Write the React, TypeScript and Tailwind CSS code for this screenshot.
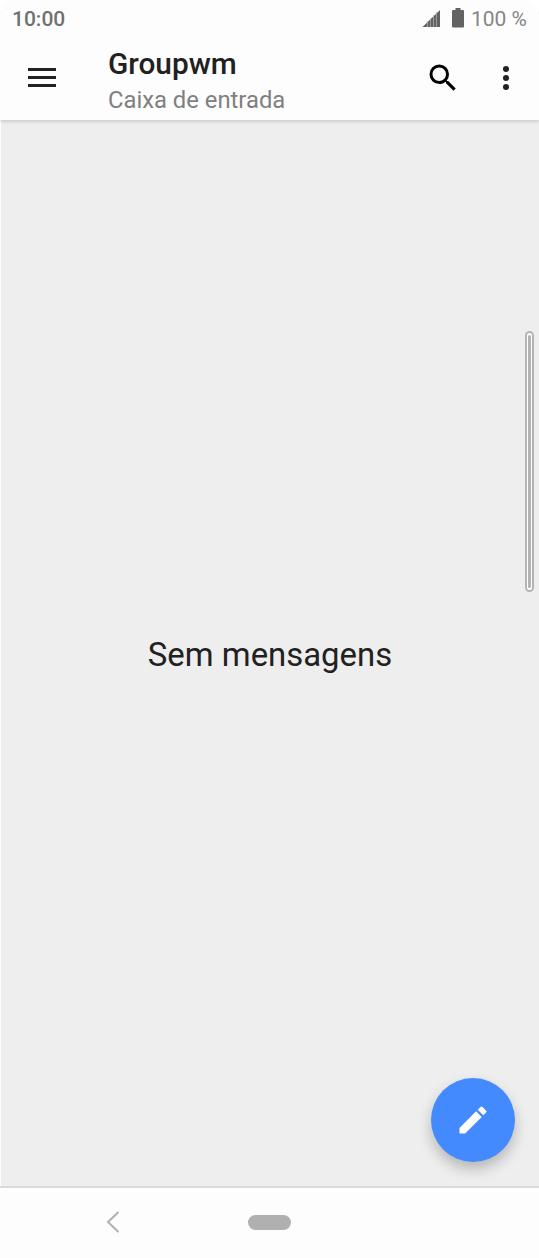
function StatusBar() {
  return (
    <div className="flex h-9 items-center justify-between pl-3 pr-3 pt-px">
      <span className="text-[21px] font-medium leading-6 text-[#707070]">10:00</span>
      <div className="flex items-center">
        <svg className="mr-[11px] h-5 w-[19px]" viewBox="0 0 19 20" fill="#636363">
          <path d="M18 1V18H0.500Z" />
          <path d="M5.500 12V18M8.500 9V18M11.500 6V18M14.500 3V18" stroke="#b4b4b4" strokeWidth="0.700" />
        </svg>
        <svg className="mb-px mr-[7px] h-5 w-3" viewBox="0 0 12 20" fill="#636363">
          <path d="M3.500 0h5v2H11a1 1 0 0 1 1 1v15.500a1 1 0 0 1-1 1H1a1 1 0 0 1-1-1V3a1 1 0 0 1 1-1h2.500z" />
        </svg>
        <span className="text-[21px] leading-6 text-[#858585]">100 %</span>
      </div>
    </div>
  );
}

function Toolbar() {
  return (
    <div className="flex h-[84px] items-start pl-7 pr-[15px]">
      <button className="mt-8 flex w-7 flex-col gap-[5px]" aria-label="Menu">
        <span className="h-[3px] w-7 bg-[#212121]" />
        <span className="h-[3px] w-7 bg-[#212121]" />
        <span className="h-[3px] w-7 bg-[#212121]" />
      </button>
      <div className="ml-[52px] mt-2.5 flex-1">
        <h1 className="text-[29.8px] font-medium leading-9 text-[#212121]">Groupwm</h1>
        <p className="text-[23.8px] leading-9 text-[#808080]">Caixa de entrada</p>
      </div>
      <button className="mt-6" aria-label="Search">
        <svg className="size-9" viewBox="0 0 24 24" fill="#000">
          <path d="M15.500 14h-.79l-.28-.27A6.471 6.471 0 0 0 16 9.500 6.500 6.500 0 1 0 9.500 16c1.610 0 3.090-.59 4.230-1.570l.27.28v.79l5 4.990L20.490 19l-4.990-5zm-6 0C7.010 14 5 11.990 5 9.500S7.010 5 9.500 5 14 7.010 14 9.500 11.990 14 9.500 14z" />
        </svg>
      </button>
      <button className="ml-[27px] mt-6" aria-label="More">
        <svg className="size-9" viewBox="0 0 24 24" fill="#212121">
          <circle cx="12" cy="6" r="2" />
          <circle cx="12" cy="12" r="2" />
          <circle cx="12" cy="18" r="2" />
        </svg>
      </button>
    </div>
  );
}

function NavBar() {
  return (
    <nav className="flex h-[72px] items-center border-t-2 border-[#dadada] bg-[#fdfdfd] pb-0.5 pl-[106px]">
      <svg className="h-[22px] w-[14px]" viewBox="0 0 14 22" fill="none">
        <path d="M12 1.500L2 11L12 20.500" stroke="#b0b0b0" strokeWidth="2" strokeLinecap="round" />
      </svg>
      <span className="ml-[128px] h-[15px] w-[43px] rounded-full bg-[#b0b0b0]" />
    </nav>
  );
}

export default function App() {
  return (
    <div className="bg-white font-['Roboto',sans-serif]">
      <div className="flex h-[1258px] w-[539px] flex-col overflow-hidden rounded-t-2xl bg-[#fdfdfd]">
        <header className="z-10 bg-[#fdfdfd] shadow-[0_1px_4px_rgba(0,0,0,0.2)]">
          <StatusBar />
          <Toolbar />
        </header>
        <main className="relative ml-px flex flex-1 items-center justify-center bg-[#eeeeee] pt-[3px]">
          <p className="text-[32.9px] leading-10 text-[#212121]">Sem mensagens</p>
          <div className="absolute right-[5px] top-[211px] h-[261px] w-[9px] rounded-full border-2 border-[#b3b3b3] bg-white px-px py-0.5">
            <div className="h-full rounded-full bg-[#b3b3b3]" />
          </div>
          <button
            className="absolute bottom-6 right-6 flex size-[84px] items-center justify-center rounded-full bg-[#448aff] shadow-[0_7px_14px_rgba(0,0,0,0.24)]"
            aria-label="Compose"
          >
            <svg className="size-9" viewBox="0 0 24 24" fill="#fff">
              <path d="M3 17.250V21h3.750L17.810 9.940l-3.750-3.750L3 17.250zM20.710 7.040a.996.996 0 0 0 0-1.410l-2.340-2.340a.996.996 0 0 0-1.410 0l-1.830 1.830 3.750 3.750 1.830-1.830z" />
            </svg>
          </button>
        </main>
        <NavBar />
      </div>
    </div>
  );
}
